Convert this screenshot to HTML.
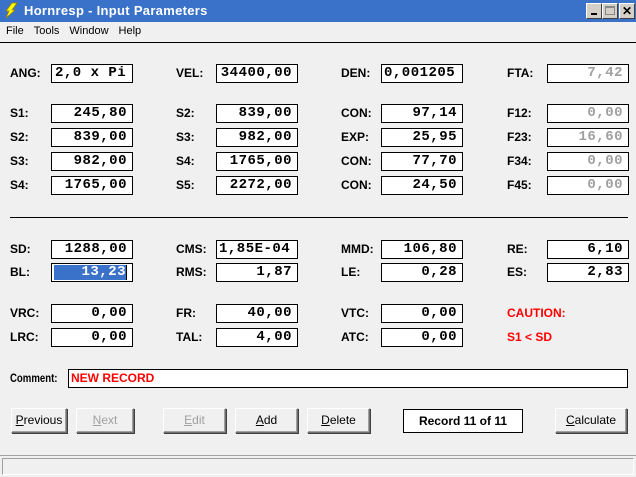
<!DOCTYPE html><html><head><style>
*{margin:0;padding:0;box-sizing:border-box}
body{width:636px;height:477px;background:#f0f0f0;position:relative;overflow:hidden;font-family:"Liberation Sans",sans-serif}
.a{position:absolute}
.tb{left:0;top:0;width:636px;height:22px;background:#3a72c9;color:#fff;font-weight:bold;font-size:13px;line-height:22px;padding-left:24px;letter-spacing:.3px}
.menu{top:23px;left:6px;font-size:11px;line-height:17px}
.menu span{margin-right:10px}
.l{font-size:12px;font-weight:bold;color:#000;line-height:18px}
.f{width:82px;height:19px;border:1px solid #000;background:#fff;font-family:"Liberation Mono",monospace;font-weight:bold;font-size:14px;line-height:17px;text-align:right;padding-right:5px;letter-spacing:.5px}
.g{color:#a0a0a0}
.btn{height:25px;top:408px;background:#f0f0f0;border:1px solid;border-color:#fff #707070 #707070 #fff;box-shadow:inset -1px -1px 0 #a0a0a0,1px 1px 0 #404040;font-size:12px;text-align:center;line-height:23px}
.dis{color:#a0a0a0}
.red{color:#f00}
.wb{position:absolute;top:3px;width:16px;height:16px;background:#d4d0c8;border:1px solid #fff;border-right-color:#404040;border-bottom-color:#404040}
</style></head><body>
<div class="a tb">Hornresp - Input Parameters</div>
<svg class="a" style="left:3px;top:2px" width="16" height="17"><polygon points="9,1 14,1 9,8 12,8 3,16 6,9 3,9" fill="#ff0" stroke="#a08000" stroke-width="0.8"/></svg>
<div class="wb" style="left:586px"><div style="position:absolute;left:4px;top:9px;width:6px;height:2px;background:#000"></div></div>
<div class="wb" style="left:602px"><div style="position:absolute;left:2px;top:2px;width:10px;height:9px;border:1px solid #888;border-top-width:2px"></div></div>
<div class="wb" style="left:619px;width:16px;font-size:12px;font-weight:bold;line-height:14px;text-align:center">✕</div>
<div class="a menu"><span>File</span><span>Tools</span><span>Window</span><span>Help</span></div>
<div class="a" style="left:0;top:42px;width:636px;height:1px;background:#000"></div>

<div class="a l" style="left:10px;top:64px">ANG:</div><div class="a f" style="left:51px;top:64px;text-align:left;padding-left:3px">2,0 x Pi</div>
<div class="a l" style="left:176px;top:64px">VEL:</div><div class="a f" style="left:216px;top:64px">34400,00</div>
<div class="a l" style="left:341px;top:64px">DEN:</div><div class="a f" style="left:381px;top:64px;text-align:left;padding-left:2px">0,001205</div>
<div class="a l" style="left:507px;top:64px">FTA:</div><div class="a f g" style="left:547px;top:64px">7,42</div>

<div class="a l" style="left:10px;top:104px">S1:</div><div class="a f" style="left:51px;top:104px">245,80</div>
<div class="a l" style="left:176px;top:104px">S2:</div><div class="a f" style="left:216px;top:104px">839,00</div>
<div class="a l" style="left:341px;top:104px">CON:</div><div class="a f" style="left:381px;top:104px">97,14</div>
<div class="a l" style="left:507px;top:104px">F12:</div><div class="a f g" style="left:547px;top:104px">0,00</div>

<div class="a l" style="left:10px;top:128px">S2:</div><div class="a f" style="left:51px;top:128px">839,00</div>
<div class="a l" style="left:176px;top:128px">S3:</div><div class="a f" style="left:216px;top:128px">982,00</div>
<div class="a l" style="left:341px;top:128px">EXP:</div><div class="a f" style="left:381px;top:128px">25,95</div>
<div class="a l" style="left:507px;top:128px">F23:</div><div class="a f g" style="left:547px;top:128px">16,60</div>

<div class="a l" style="left:10px;top:152px">S3:</div><div class="a f" style="left:51px;top:152px">982,00</div>
<div class="a l" style="left:176px;top:152px">S4:</div><div class="a f" style="left:216px;top:152px">1765,00</div>
<div class="a l" style="left:341px;top:152px">CON:</div><div class="a f" style="left:381px;top:152px">77,70</div>
<div class="a l" style="left:507px;top:152px">F34:</div><div class="a f g" style="left:547px;top:152px">0,00</div>

<div class="a l" style="left:10px;top:176px">S4:</div><div class="a f" style="left:51px;top:176px">1765,00</div>
<div class="a l" style="left:176px;top:176px">S5:</div><div class="a f" style="left:216px;top:176px">2272,00</div>
<div class="a l" style="left:341px;top:176px">CON:</div><div class="a f" style="left:381px;top:176px">24,50</div>
<div class="a l" style="left:507px;top:176px">F45:</div><div class="a f g" style="left:547px;top:176px">0,00</div>

<div class="a" style="left:10px;top:217px;width:618px;height:1px;background:#000"></div>

<div class="a l" style="left:10px;top:240px">SD:</div><div class="a f" style="left:51px;top:240px">1288,00</div>
<div class="a l" style="left:176px;top:240px">CMS:</div><div class="a f" style="left:216px;top:240px;text-align:left;padding-left:2px">1,85E-04</div>
<div class="a l" style="left:341px;top:240px">MMD:</div><div class="a f" style="left:381px;top:240px">106,80</div>
<div class="a l" style="left:507px;top:240px">RE:</div><div class="a f" style="left:547px;top:240px">6,10</div>

<div class="a l" style="left:10px;top:263px">BL:</div><div class="a f" style="left:51px;top:263px;padding:1px 5px 1px 2px"><div style="background:#3a72c9;color:#fff;height:15px;line-height:15px;border-right:1px solid #000">13,23</div></div>
<div class="a l" style="left:176px;top:263px">RMS:</div><div class="a f" style="left:216px;top:263px">1,87</div>
<div class="a l" style="left:341px;top:263px">LE:</div><div class="a f" style="left:381px;top:263px">0,28</div>
<div class="a l" style="left:507px;top:263px">ES:</div><div class="a f" style="left:547px;top:263px">2,83</div>

<div class="a l" style="left:10px;top:304px">VRC:</div><div class="a f" style="left:51px;top:304px">0,00</div>
<div class="a l" style="left:176px;top:304px">FR:</div><div class="a f" style="left:216px;top:304px">40,00</div>
<div class="a l" style="left:341px;top:304px">VTC:</div><div class="a f" style="left:381px;top:304px">0,00</div>
<div class="a l red" style="left:507px;top:304px">CAUTION:</div>

<div class="a l" style="left:10px;top:369px;font-size:12px;transform:scaleX(0.8);transform-origin:0 0">Comment:</div>
<div class="a" style="left:68px;top:369px;width:560px;height:19px;border:1px solid #000;background:#fff;color:#f00;font-weight:bold;font-size:12px;line-height:17px;padding-left:2px">NEW RECORD</div>

<div class="a l" style="left:10px;top:328px">LRC:</div><div class="a f" style="left:51px;top:328px">0,00</div>
<div class="a l" style="left:176px;top:328px">TAL:</div><div class="a f" style="left:216px;top:328px">4,00</div>
<div class="a l" style="left:341px;top:328px">ATC:</div><div class="a f" style="left:381px;top:328px">0,00</div>
<div class="a l red" style="left:507px;top:328px">S1 &lt; SD</div>

<div class="a btn" style="left:11px;width:56px"><u>P</u>revious</div>
<div class="a btn dis" style="left:76px;width:58px"><u>N</u>ext</div>
<div class="a btn dis" style="left:163px;width:63px"><u>E</u>dit</div>
<div class="a btn" style="left:235px;width:63px"><u>A</u>dd</div>
<div class="a btn" style="left:307px;width:63px"><u>D</u>elete</div>
<div class="a" style="left:403px;top:409px;width:120px;height:24px;border:1px solid #000;background:#fff;font-weight:bold;font-size:12px;text-align:center;line-height:22px">Record 11 of 11</div>
<div class="a btn" style="left:555px;width:72px"><u>C</u>alculate</div>

<div class="a" style="left:0;top:455px;width:636px;height:22px;border-top:1px solid #a0a0a0"><div style="margin:2px;height:17px;border:1px solid #a0a0a0;border-right-color:#fff;border-bottom-color:#fff"></div></div>
</body></html>
